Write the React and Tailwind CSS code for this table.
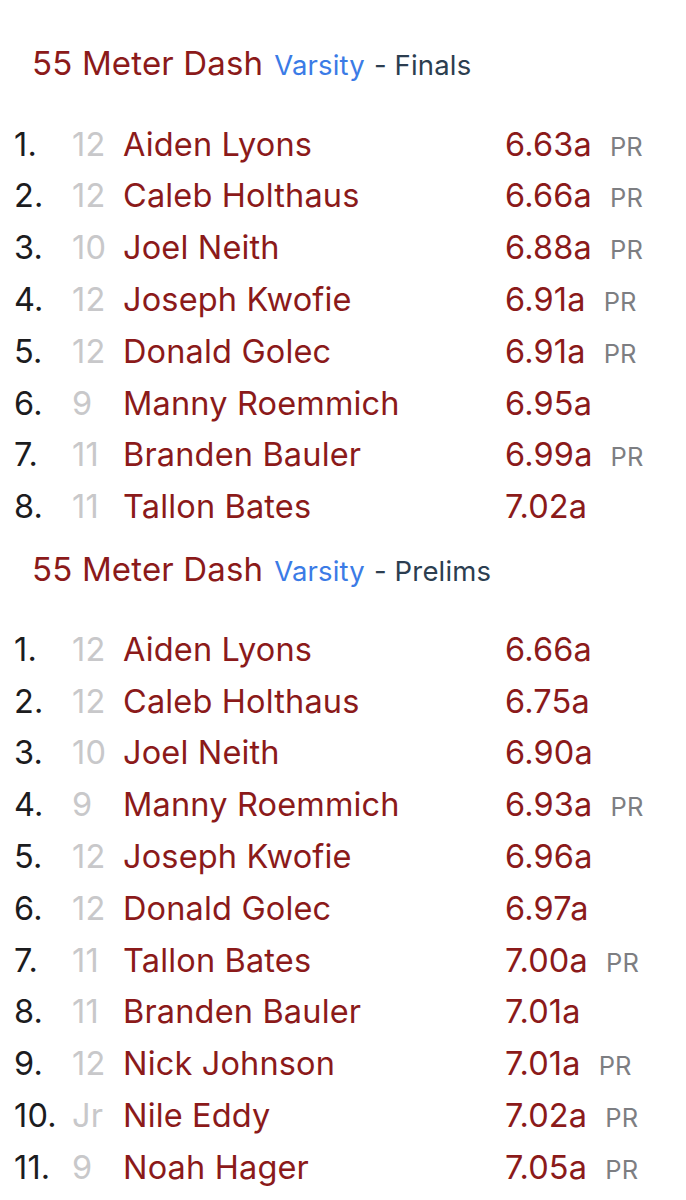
const finals = [
  ["1.", "12", "Aiden Lyons", "6.63a", true],
  ["2.", "12", "Caleb Holthaus", "6.66a", true],
  ["3.", "10", "Joel Neith", "6.88a", true],
  ["4.", "12", "Joseph Kwofie", "6.91a", true],
  ["5.", "12", "Donald Golec", "6.91a", true],
  ["6.", "9", "Manny Roemmich", "6.95a", false],
  ["7.", "11", "Branden Bauler", "6.99a", true],
  ["8.", "11", "Tallon Bates", "7.02a", false],
];
const prelims = [
  ["1.", "12", "Aiden Lyons", "6.66a", false],
  ["2.", "12", "Caleb Holthaus", "6.75a", false],
  ["3.", "10", "Joel Neith", "6.90a", false],
  ["4.", "9", "Manny Roemmich", "6.93a", true],
  ["5.", "12", "Joseph Kwofie", "6.96a", false],
  ["6.", "12", "Donald Golec", "6.97a", false],
  ["7.", "11", "Tallon Bates", "7.00a", true],
  ["8.", "11", "Branden Bauler", "7.01a", false],
  ["9.", "12", "Nick Johnson", "7.01a", true],
  ["10.", "Jr", "Nile Eddy", "7.02a", true],
  ["11.", "9", "Noah Hager", "7.05a", true],
];

function Header({ round }) {
  return (
    <div className="h-[40px] flex items-center pl-[32px]">
      <div className="flex items-baseline tracking-[0.01em]">
        <span className="text-[33px] text-[#8b1a1a]">55 Meter Dash</span>
        <span className="text-[27.5px] text-[#3b7be6] ml-[11px]">Varsity</span>
        <span className="text-[27.5px] text-[#2c3e50] ml-[9px]">- {round}</span>
      </div>
    </div>
  );
}

function Row({ r }) {
  return (
    <div className="h-[51.8px] flex items-center pt-[2px]">
      <div className="flex items-baseline w-full tracking-[0.01em]">
        <span className="w-[72px] pl-[14px] text-[#1c1c1e] text-[32.5px] shrink-0">{r[0]}</span>
        <span className="w-[51px] text-[#c8c8ca] text-[32.5px] shrink-0">{r[1]}</span>
        <span className="w-[382px] text-[#8b1a1a] text-[32.5px] shrink-0">{r[2]}</span>
        <span className="text-[#8b1a1a] text-[32.5px]">{r[3]}</span>
        {r[4] && <span className="ml-[18px] text-[#7d7e82] text-[25.5px]">PR</span>}
      </div>
    </div>
  );
}

export default function App() {
  return (
    <div
      className="w-[686px] h-[1200px] bg-white overflow-hidden pt-[44px]"
      style={{ fontFamily: "Inter, 'Noto Sans', sans-serif" }}
    >
      <Header round="Finals" />
      <div className="h-[34px]" />
      {finals.map((r, i) => (
        <Row key={i} r={r} />
      ))}
      <div className="h-[17px]" />
      <Header round="Prelims" />
      <div className="h-[34px]" />
      {prelims.map((r, i) => (
        <Row key={i} r={r} />
      ))}
    </div>
  );
}
